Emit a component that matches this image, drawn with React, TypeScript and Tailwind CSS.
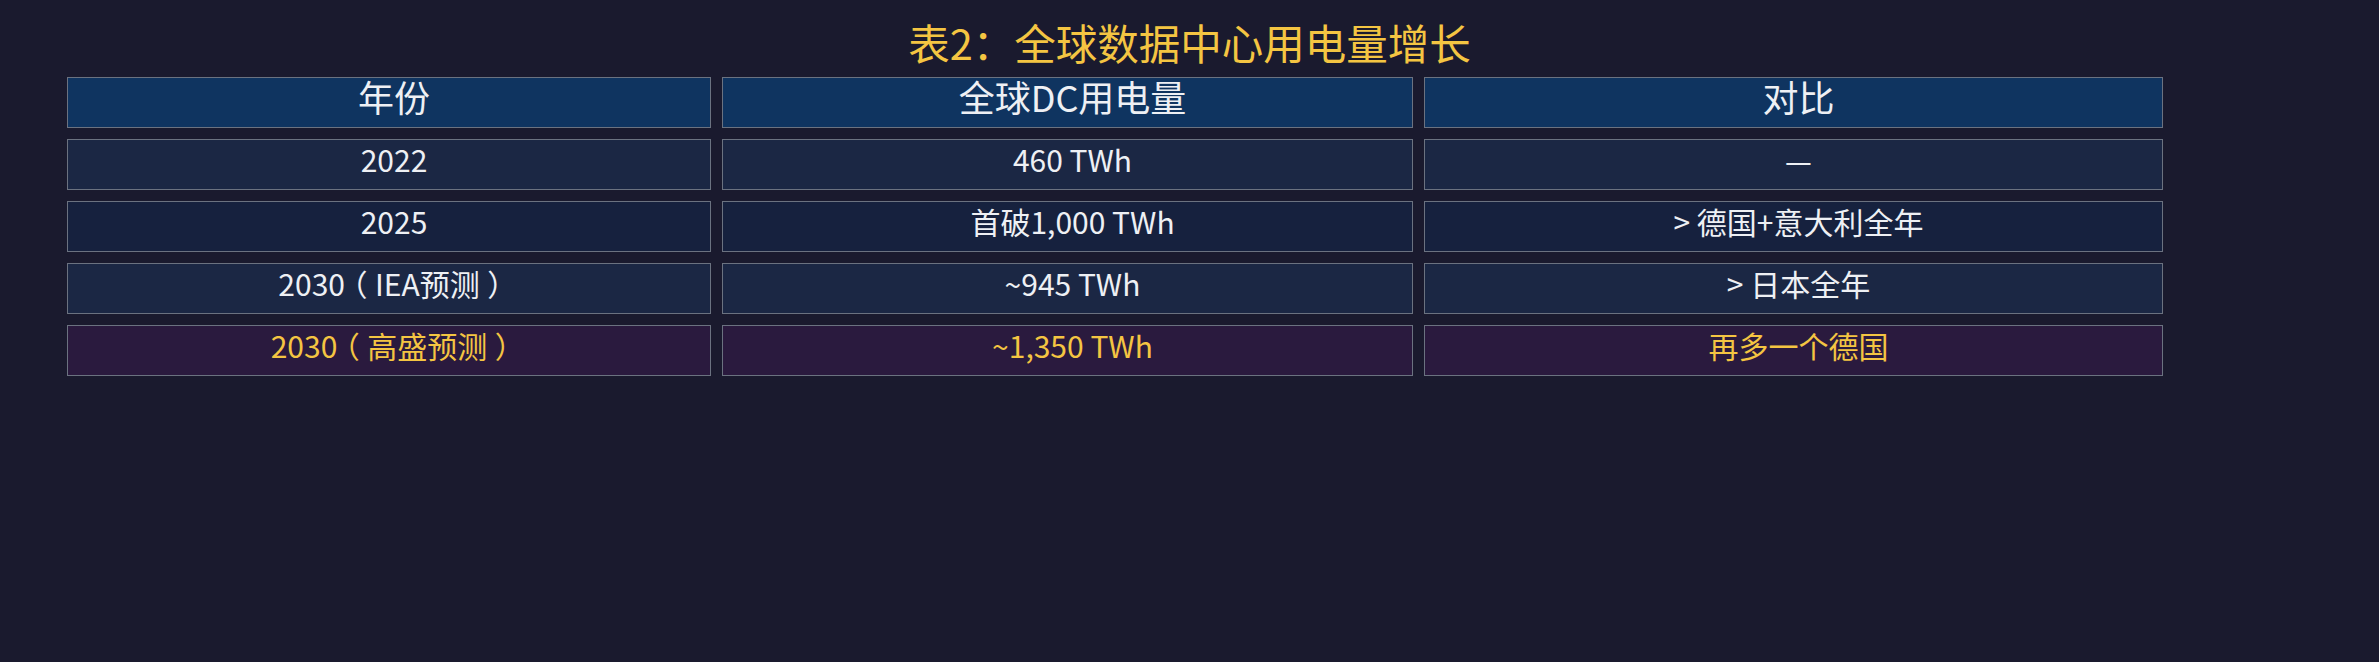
import React from "react";

type Row = { cells: string[]; variant: "a" | "b" | "hi" };

const rows: Row[] = [
  { cells: ["2022", "460 TWh", "—"], variant: "a" },
  { cells: ["2025", "首破1,000 TWh", "> 德国+意大利全年"], variant: "b" },
  { cells: ["2030（IEA预测）", "~945 TWh", "> 日本全年"], variant: "a" },
  { cells: ["2030（高盛预测）", "~1,350 TWh", "再多一个德国"], variant: "hi" },
];

function Txt({ s }: { s: string }) {
  const parts = s.split(/([（）])/).filter((p) => p !== "");
  return (
    <>
      {parts.map((p, i) =>
        p === "（" || p === "）" ? (
          <span key={i} className="px-[0.25em] [font-feature-settings:'halt']">
            {p}
          </span>
        ) : (
          <React.Fragment key={i}>{p}</React.Fragment>
        )
      )}
    </>
  );
}

export default function App() {
  return (
    <div
      className="w-[2379px] h-[662px] bg-[#1a1a2e] overflow-hidden"
      style={{ fontFamily: '"Noto Sans CJK SC", "Noto Sans", sans-serif' }}
    >
      <h1 className="pt-[22px] text-center text-[41.5px] leading-none font-normal text-[#f4c542]">
        表2：全球数据中心用电量增长
      </h1>
      <div className="ml-[67px] mt-[13.5px] grid grid-cols-[644px_691px_739px] gap-[11px]">
        {["年份", "全球DC用电量", "对比"].map((h) => (
          <div
            key={h}
            className="h-[51px] border border-[#6b7280] bg-[#0f3460] pl-[10px] text-center text-[36px] leading-none text-[#eef0f4]"
          >
            {h}
          </div>
        ))}
        {rows.map((r, i) =>
          r.cells.map((c, j) => (
            <div
              key={`${i}-${j}`}
              className={
                "h-[51px] border border-[#6b7280] pl-[10px] pt-[4px] text-center text-[30px] leading-none " +
                (r.variant === "a"
                  ? "bg-[#1b2744] text-[#eef0f4]"
                  : r.variant === "b"
                  ? "bg-[#16213e] text-[#eef0f4]"
                  : "bg-[#2a1a3e] text-[#f4c542]")
              }
            >
              <Txt s={c} />
            </div>
          ))
        )}
      </div>
    </div>
  );
}
